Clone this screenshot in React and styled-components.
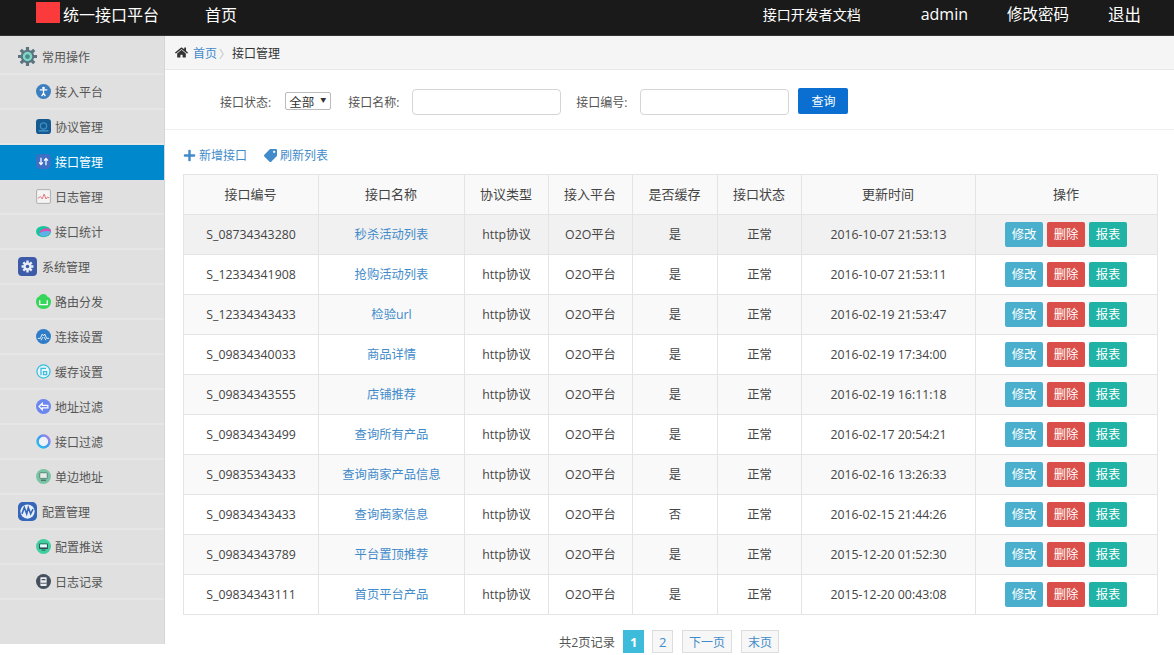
import React from 'react';
import styled, { createGlobalStyle } from 'styled-components';
import { FaHome, FaPlus, FaTag } from 'react-icons/fa';

const GlobalStyle = createGlobalStyle`
  html, body {
    margin: 0;
    padding: 0;
    background: #fff;
    font-family: "Open Sans", "Noto Sans CJK SC", sans-serif;
    font-size: 12px;
    color: #555;
  }
  * { box-sizing: border-box; }
`;

const Page = styled.div`
  width: 1174px;
  height: 655px;
  overflow: hidden;
`;

const TopBar = styled.div`
  height: 36px;
  background: #1a1a1a;
  border-bottom: 1px solid #333;
  color: #fff;
  display: flex;
  align-items: center;
  padding: 0 33px 8px 36px;
`;

const Logo = styled.div`
  width: 24px;
  height: 21px;
  align-self: flex-start;
  margin-top: 2px;
  background: #fb3b3b;
`;

const Brand = styled.div`
  margin-left: 3px;
  font-size: 16px;
  width: 142px;
`;

const TopLink = styled.div`
  margin-left: ${(p) => p.$gap || 0}px;
  font-size: ${(p) => p.$size}px;
`;

const Spacer = styled.div`
  flex: 1;
`;

const Body = styled.div`
  display: flex;
  align-items: flex-start;
`;

const Sidebar = styled.div`
  width: 165px;
  height: 608px;
  background: #e0e0e0;
  border-right: 1px solid #d6d6d6;
  flex-shrink: 0;
  padding-top: 4px;
`;

const MenuRow = styled.div`
  height: 35px;
  display: flex;
  align-items: center;
  gap: ${(p) => (p.$top ? 5 : 4)}px;
  padding-left: ${(p) => (p.$top ? 18 : 36)}px;
  background: ${(p) => (p.$active ? '#0088cc' : 'transparent')};
  color: ${(p) => (p.$active ? '#fff' : '#555')};
  border-bottom: 2px solid ${(p) => (p.$active ? '#0088cc' : '#e6e6e6')};
`;

const MenuIcon = styled.svg`
  width: ${(p) => (p.$top ? 19 : 15)}px;
  height: ${(p) => (p.$top ? 19 : 15)}px;
  flex-shrink: 0;
`;

const Main = styled.div`
  flex: 1;
  min-width: 0;
`;

const Breadcrumb = styled.div`
  height: 34px;
  background: #f5f5f5;
  border-bottom: 1px solid #e8e8e8;
  display: flex;
  align-items: center;
  padding-left: 10px;
  color: #333;

  svg {
    width: 13px;
    height: 13px;
    margin-right: 5px;
  }
`;

const CrumbLink = styled.span`
  color: #428bca;
`;

const CrumbSep = styled.span`
  color: #bbb;
  margin: 0 2px;
  font-size: 11px;
`;

const FilterBar = styled.div`
  height: 60px;
  border-bottom: 1px solid #eee;
  display: flex;
  align-items: center;
  padding-left: 55px;
  padding-top: 5px;
`;

const FieldLabel = styled.span`
  margin-left: ${(p) => p.$gap || 0}px;
  margin-right: ${(p) => p.$right || 13}px;
`;

const FakeSelect = styled.div`
  width: 46px;
  height: 18px;
  margin-top: -2px;
  border: 1px solid #bbb;
  border-radius: 2px;
  background: #fff;
  color: #333;
  display: flex;
  align-items: center;
  justify-content: space-between;
  padding: 0 4px 0 3px;
  font-size: 12.5px;

  i {
    font-style: normal;
    font-size: 6px;
    margin-top: -3px;
  }
`;

const TextInput = styled.input`
  width: 149px;
  height: 26px;
  border: 1px solid #d5d5d5;
  border-radius: 4px;
  background: #fff;
  outline: none;
`;

const SearchButton = styled.button`
  width: 50px;
  height: 26px;
  margin-left: 9px;
  margin-top: -3px;
  border: none;
  border-radius: 2px;
  background: #0a6fd0;
  color: #fff;
  font: inherit;
  padding: 0;
`;

const Content = styled.div`
  padding: 0 16px 0 18px;
`;

const Actions = styled.div`
  height: 44px;
  display: flex;
  align-items: center;
  color: #428bca;
  padding-top: 6px;
`;

const ActionLink = styled.div`
  display: flex;
  align-items: center;
  gap: 3px;
  margin-right: 17px;

  svg {
    width: 13px;
    height: 13px;
    transform: ${(p) => (p.$flip ? 'scaleX(-1)' : 'none')};
  }
`;

const Table = styled.table`
  width: 974px;
  table-layout: fixed;
  border-collapse: collapse;
  border: 1px solid #e2e2e2;
`;

const Th = styled.th`
  height: 40px;
  padding: 0 1px 3px 0;
  font-weight: 400;
  font-size: 13px;
  color: #444;
  background: #f9f9f9;
  border: 1px solid #e4e4e4;
  text-align: center;
`;

const Tr = styled.tr`
  background: ${(p) => (p.$hover ? '#f1f1f1' : p.$odd ? '#f9f9f9' : '#fff')};
`;

const Td = styled.td`
  height: 40px;
  padding: 0 0 1px;
  border: 1px solid #e4e4e4;
  text-align: center;
  font-size: 12.3px;
  color: ${(p) => (p.$link ? '#428bca' : '#444')};
`;

const ButtonRow = styled.div`
  display: flex;
  justify-content: center;
  gap: 4px;
  padding-right: 1px;
`;

const RowButton = styled.button`
  width: 38px;
  height: 25px;
  padding: 0;
  border: none;
  border-radius: 2px;
  background: ${(p) => p.$bg};
  color: #fff;
  font: inherit;
  font-size: 12.3px;
`;

const Pager = styled.div`
  margin-top: 15px;
  display: flex;
  align-items: center;
  justify-content: center;
  padding-right: 3px;
  font-size: 12.3px;
`;

const PageButton = styled.div`
  height: 23px;
  min-width: ${(p) => p.$w}px;
  margin-left: ${(p) => p.$gap}px;
  border: 1px solid ${(p) => (p.$on ? '#3dbbdb' : '#ddd')};
  background: ${(p) => (p.$on ? '#3dbbdb' : '#f7f7f7')};
  color: ${(p) => (p.$on ? '#fff' : '#428bca')};
  display: flex;
  align-items: center;
  justify-content: center;
  font-weight: ${(p) => (p.$on ? 700 : 400)};
  font-size: ${(p) => (p.$num ? 13 : 12)}px;
`;

const icons = {
  gear: (
    <>
      <circle cx="12" cy="12" r="8.5" fill="#5b7480" />
      <g stroke="#5b7480" strokeWidth="4">
        <path d="M12 0v24M0 12h24M3.5 3.5l17 17M20.5 3.5l-17 17" />
      </g>
      <circle cx="12" cy="12" r="6" fill="#7fd8c6" />
      <circle cx="12" cy="12" r="3" fill="#4d8a8a" />
    </>
  ),
  access: (
    <>
      <circle cx="12" cy="12" r="12" fill="#3b7fc0" />
      <circle cx="12" cy="6.5" r="2.2" fill="#fff" />
      <path d="M6 9.5h12M12 9.5v5M12 14.5l-3 5M12 14.5l3 5" stroke="#fff" strokeWidth="2" />
    </>
  ),
  protocol: (
    <>
      <rect x="0" y="0" width="24" height="24" rx="5" fill="#14598f" />
      <circle cx="12" cy="11" r="5" fill="none" stroke="#3d8fc4" strokeWidth="2" />
      <rect x="4" y="18" width="16" height="2" fill="#4a9ad0" />
    </>
  ),
  swap: (
    <>
      <rect x="0" y="0" width="24" height="24" rx="7" fill="#3f6fc4" />
      <path d="M8 6v11M5 13.5L8 17l3-3.5M16 18V7M13 10.5L16 7l3 3.5" stroke="#fff" strokeWidth="2" fill="none" />
    </>
  ),
  log: (
    <>
      <rect x="1" y="1" width="22" height="22" rx="2" fill="#f4f4f4" stroke="#aaa" strokeWidth="1.5" />
      <path d="M3 15l4-3 3 4 3-8 3 8 2-3 3 1" stroke="#e2707a" strokeWidth="1.5" fill="none" />
    </>
  ),
  stats: (
    <>
      <ellipse cx="12" cy="12" rx="12" ry="9" fill="#12c79a" />
      <path d="M5 13C9 7 17 5 24 9c0 5-5 10-11 10-4 0-7-3-8-6z" fill="#d64fb4" />
      <path d="M5 15c5-4 12-5 18-3-1 5-6 8-11 8-3 0-6-2-7-5z" fill="#5ab4e6" />
    </>
  ),
  system: (
    <>
      <rect x="0" y="0" width="24" height="24" rx="5" fill="#3d5ba8" />
      <circle cx="12" cy="12" r="5" fill="#e8ecf6" />
      <g stroke="#e8ecf6" strokeWidth="3">
        <path d="M12 4.5v15M4.5 12h15M6.7 6.7l10.6 10.6M17.3 6.7L6.7 17.3" />
      </g>
      <circle cx="12" cy="12" r="2.2" fill="#3d5ba8" />
    </>
  ),
  router: (
    <>
      <path d="M12 0c3 0 5 2 6 4 3 1 6 4 6 8 0 7-5 12-12 12S0 19 0 12c0-4 2-7 5-8 1-2 4-4 7-4z" fill="#35d659" />
      <path d="M6 10v7h12v-7" stroke="#fff" strokeWidth="2" fill="none" />
    </>
  ),
  store: (
    <>
      <circle cx="12" cy="12" r="12" fill="#2f7dc8" />
      <path d="M3 15h4l3-7 2 3 2-3 3 7h4M8 18l3-5M16 18l-3-5" stroke="#dfeaf6" strokeWidth="1.6" fill="none" />
    </>
  ),
  cache: (
    <>
      <circle cx="12" cy="12" r="10.5" fill="#e8f5fa" stroke="#38bde0" strokeWidth="2" />
      <path d="M8 18V7h8M12 17v-5h5v5z" stroke="#38bde0" strokeWidth="2" fill="none" />
    </>
  ),
  back: (
    <>
      <circle cx="12" cy="12" r="12" fill="#6b86ee" />
      <path d="M5 12l5-5v3h9v4h-9v3z" fill="none" stroke="#fff" strokeWidth="2" />
    </>
  ),
  ring: (
    <>
      <defs>
        <linearGradient id="ringStroke" x1="1" y1="0" x2="0" y2="1">
          <stop offset="0" stopColor="#b57be6" />
          <stop offset="0.5" stopColor="#3f9cf4" />
          <stop offset="1" stopColor="#22c4ee" />
        </linearGradient>
      </defs>
      <circle cx="12" cy="12" r="9.5" fill="#eef2f6" stroke="url(#ringStroke)" strokeWidth="4" />
    </>
  ),
  screen: (
    <>
      <circle cx="12" cy="12" r="12" fill="#79c4a4" />
      <rect x="6" y="6" width="12" height="9" rx="1" fill="#e4eee8" stroke="#4a6a64" strokeWidth="1.2" />
      <rect x="8" y="17" width="8" height="2" fill="#4a6a64" />
    </>
  ),
  config: (
    <>
      <rect x="0" y="0" width="24" height="24" rx="6" fill="#3566b8" />
      <circle cx="12" cy="12" r="9" fill="#e8effa" />
      <path d="M5 15l3-8 3 8 2-8 3 8 3-6" stroke="#3566b8" strokeWidth="2" fill="none" />
    </>
  ),
  push: (
    <>
      <circle cx="12" cy="12" r="12" fill="#3fcf9f" />
      <rect x="5" y="7" width="14" height="9" rx="1" fill="#2f4a50" />
      <rect x="6.5" y="8.5" width="11" height="5" fill="#dff" />
      <rect x="9" y="17" width="6" height="1.5" fill="#2f4a50" />
    </>
  ),
  record: (
    <>
      <circle cx="12" cy="12" r="12" fill="#454f5e" />
      <rect x="7" y="5" width="10" height="14" rx="1" fill="#eceff2" />
      <rect x="9" y="8" width="6" height="2" fill="#454f5e" />
      <rect x="7" y="14" width="10" height="1.5" fill="#454f5e" />
    </>
  ),
};

function MenuItem({ icon, label, top, active }) {
  return (
    <MenuRow $top={top} $active={active}>
      <MenuIcon $top={top} viewBox="0 0 24 24">
        {icons[icon]}
      </MenuIcon>
      <span>{label}</span>
    </MenuRow>
  );
}

const menu = [
  { icon: 'gear', label: '常用操作', top: true },
  { icon: 'access', label: '接入平台' },
  { icon: 'protocol', label: '协议管理' },
  { icon: 'swap', label: '接口管理', active: true },
  { icon: 'log', label: '日志管理' },
  { icon: 'stats', label: '接口统计' },
  { icon: 'system', label: '系统管理', top: true },
  { icon: 'router', label: '路由分发' },
  { icon: 'store', label: '连接设置' },
  { icon: 'cache', label: '缓存设置' },
  { icon: 'back', label: '地址过滤' },
  { icon: 'ring', label: '接口过滤' },
  { icon: 'screen', label: '单边地址' },
  { icon: 'config', label: '配置管理', top: true },
  { icon: 'push', label: '配置推送' },
  { icon: 'record', label: '日志记录' },
];

const columns = [
  ['接口编号', 135],
  ['接口名称', 146],
  ['协议类型', 84],
  ['接入平台', 84],
  ['是否缓存', 85],
  ['接口状态', 84],
  ['更新时间', 174],
  ['操作', 182],
];

const rows = [
  ['S_08734343280', '秒杀活动列表', '是', '2016-10-07 21:53:13'],
  ['S_12334341908', '抢购活动列表', '是', '2016-10-07 21:53:11'],
  ['S_12334343433', '检验url', '是', '2016-02-19 21:53:47'],
  ['S_09834340033', '商品详情', '是', '2016-02-19 17:34:00'],
  ['S_09834343555', '店铺推荐', '是', '2016-02-19 16:11:18'],
  ['S_09834343499', '查询所有产品', '是', '2016-02-17 20:54:21'],
  ['S_09835343433', '查询商家产品信息', '是', '2016-02-16 13:26:33'],
  ['S_09834343433', '查询商家信息', '否', '2016-02-15 21:44:26'],
  ['S_09834343789', '平台置顶推荐', '是', '2015-12-20 01:52:30'],
  ['S_09834343111', '首页平台产品', '是', '2015-12-20 00:43:08'],
];

export default function App() {
  return (
    <Page>
      <GlobalStyle />
      <TopBar>
        <Logo />
        <Brand>统一接口平台</Brand>
        <TopLink $size={16}>首页</TopLink>
        <Spacer />
        <TopLink $size={14}>接口开发者文档</TopLink>
        <TopLink $size={16} $gap={60}>admin</TopLink>
        <TopLink $size={15.5} $gap={39}>修改密码</TopLink>
        <TopLink $size={16.5} $gap={39}>退出</TopLink>
      </TopBar>
      <Body>
        <Sidebar>
          {menu.map((item) => (
            <MenuItem key={item.label} {...item} />
          ))}
        </Sidebar>
        <Main>
          <Breadcrumb>
            <FaHome color="#333" />
            <CrumbLink>首页</CrumbLink>
            <CrumbSep>〉</CrumbSep>
            <span>接口管理</span>
          </Breadcrumb>
          <FilterBar>
            <FieldLabel $right={14}>接口状态:</FieldLabel>
            <FakeSelect>
              全部<i>▼</i>
            </FakeSelect>
            <FieldLabel $gap={17}>接口名称:</FieldLabel>
            <TextInput />
            <FieldLabel $gap={15}>接口编号:</FieldLabel>
            <TextInput />
            <SearchButton>查询</SearchButton>
          </FilterBar>
          <Content>
            <Actions>
              <ActionLink>
                <FaPlus />
                新增接口
              </ActionLink>
              <ActionLink $flip>
                <FaTag />
                刷新列表
              </ActionLink>
            </Actions>
            <Table>
              <colgroup>
                {columns.map(([name, width]) => (
                  <col key={name} width={width} />
                ))}
              </colgroup>
              <thead>
                <tr>
                  {columns.map(([name]) => (
                    <Th key={name}>{name}</Th>
                  ))}
                </tr>
              </thead>
              <tbody>
                {rows.map((row, i) => (
                  <Tr key={row[3]} $odd={i % 2 === 0} $hover={i === 0}>
                    <Td>{row[0]}</Td>
                    <Td $link>{row[1]}</Td>
                    <Td>http协议</Td>
                    <Td>O2O平台</Td>
                    <Td>{row[2]}</Td>
                    <Td>正常</Td>
                    <Td>{row[3]}</Td>
                    <Td>
                      <ButtonRow>
                        <RowButton $bg="#49afcd">修改</RowButton>
                        <RowButton $bg="#da4f49">删除</RowButton>
                        <RowButton $bg="#20b2a4">报表</RowButton>
                      </ButtonRow>
                    </Td>
                  </Tr>
                ))}
              </tbody>
            </Table>
            <Pager>
              <span>共2页记录</span>
              <PageButton $on $num $w={21} $gap={8}>
                1
              </PageButton>
              <PageButton $num $w={21} $gap={8}>
                2
              </PageButton>
              <PageButton $w={50} $gap={9}>
                下一页
              </PageButton>
              <PageButton $w={38} $gap={9}>
                末页
              </PageButton>
            </Pager>
          </Content>
        </Main>
      </Body>
    </Page>
  );
}
